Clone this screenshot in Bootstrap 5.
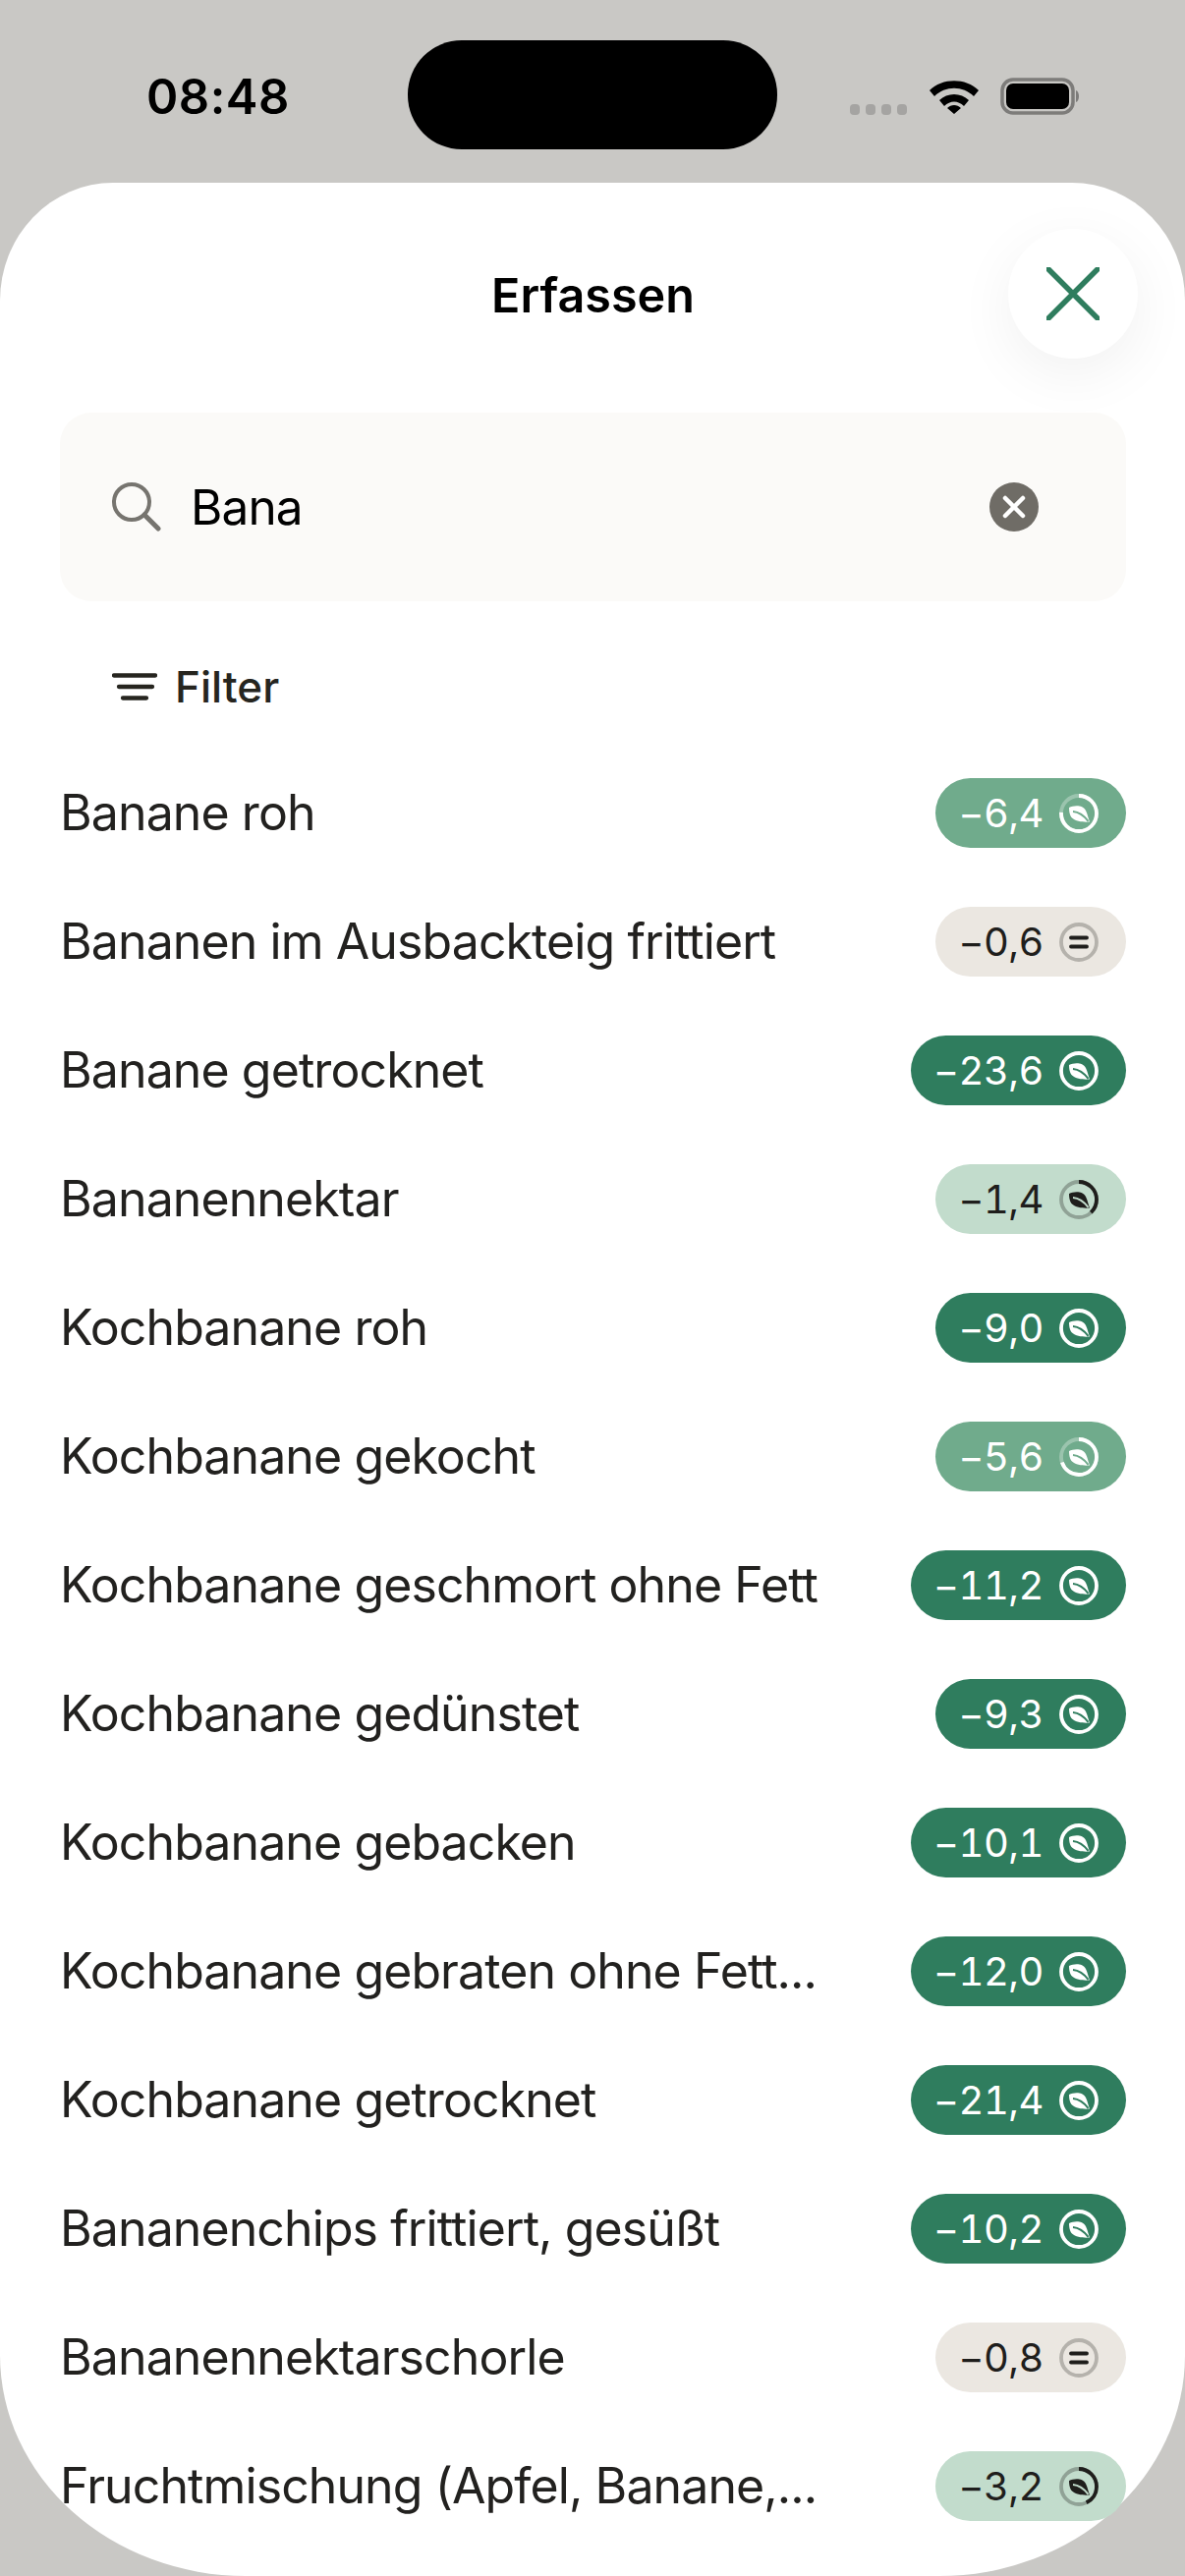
<!DOCTYPE html>
<html lang="de">
<head>
<meta charset="utf-8">
<title>Erfassen</title>
<link href="https://cdn.jsdelivr.net/npm/bootstrap@5.3.0/dist/css/bootstrap.min.css" rel="stylesheet">
<style>
html,body{height:100%}
body{background:#c9c8c5;font-family:Inter,"Liberation Sans",sans-serif;color:#1f1e1c;overflow:hidden}
.phone-frame{height:2622px;width:1206px}
.status-strip{height:186px;flex:none;padding:0 0 0 149px}
.clock-text{width:266px;font-size:49px;font-weight:600;color:#000;line-height:1;letter-spacing:.5px;margin-top:10px}
.island-pill{width:376px;height:111px;border-radius:55px;background:#000;margin-top:7px}
.status-icons{margin-left:74px;margin-top:9px}
.signal-dots{gap:6px;margin-top:27px;margin-right:22px}
.signal-dots i{display:block;width:10px;height:11px;border-radius:4px;background:#a5a4a2}
.battery-mark{margin-left:21px}
.sheet-panel{flex:1;background:#fff;border-radius:115px 115px 250px 250px/120px 120px 225px 225px;position:relative;padding:0 60px 0 61px}
.sheet-title{height:234px;padding-bottom:4px;font-size:48.500px;font-weight:600;color:#000}
.close-round{position:absolute;top:47px;right:48px;width:132px;height:132px;border:0;padding:0;border-radius:50%;background:#fff;box-shadow:0 16px 60px rgba(0,0,0,.06)}
.search-field{height:192px;border-radius:32px;background:#fbfaf8;padding:0 89px 0 53px;font-size:49.500px;letter-spacing:-.9px;color:#000}
.search-field span{margin-left:30px}
.filter-line{height:150px;padding:23px 0 0 53px;font-size:44px;font-weight:500;gap:18px;color:#26251f}
.food-row{height:131px;font-size:50px;letter-spacing:-.9px}
.food-name{color:#22211f}
.score-pill{height:71px;border-radius:36px;padding:0 28px 0 23px;font-size:40px;gap:16px;line-height:1;letter-spacing:-.5px;font-variant-numeric:tabular-nums}
.tone-strong{background:#2f7d5e;color:#fff;--cut:#2f7d5e}
.tone-mid{background:#70ab8c;color:#fff;--cut:#70ab8c}
.tone-soft{background:#c2dccc;color:#1f1e1c;--cut:#c2dccc}
.tone-flat{background:#ebe7e1;color:#1f1e1c}
.ring-track{opacity:.3}
.flat-ring{stroke:#b5b2ac}
</style>
</head>
<body>
<svg width="0" height="0" class="position-absolute">
<symbol id="leaf" viewBox="0 0 40 40">
<path d="M10 14C15 11.500 24 11 27 17C29 21 29.500 25 31 28.500C26 29 17 28.500 13 24.500C10.500 22 10 17 10 14Z" fill="currentColor"/>
<path d="M14 18C20 18.500 25 22 29.500 27.800" fill="none" stroke="var(--cut)" stroke-width="2"/>
</symbol>
</svg>
<div class="phone-frame d-flex flex-column">
<header class="status-strip d-flex align-items-center">
<div class="clock-text">08:48</div>
<div class="island-pill"></div>
<div class="status-icons d-flex align-items-center">
<div class="signal-dots d-flex"><i></i><i></i><i></i><i></i></div>
<svg width="52" height="38" viewBox="0 0 52 38"><path d="M1 14C14 1 38 1 51 14L46 20C35 9 17 9 6 20Z M11 24C19 16 33 16 41 24L36 30C30 24 22 24 16 30Z M19 32C23 28 29 28 33 32L26 38Z" fill="#000" transform="translate(0 -1)"/></svg>
<svg class="battery-mark" width="82" height="38" viewBox="0 0 82 38"><rect x="2" y="2" width="72" height="34" rx="11" fill="none" stroke="#7d7c7a" stroke-width="3.500"/><rect x="6" y="6" width="64" height="26" rx="7" fill="#000"/><path d="M77 13C81 14 81 24 77 25Z" fill="#7d7c7a"/></svg>
</div>
</header>
<main class="sheet-panel">
<div class="sheet-title d-flex align-items-center justify-content-center">Erfassen</div>
<button class="close-round d-flex align-items-center justify-content-center" type="button" aria-label="Schließen">
<svg width="54" height="54" viewBox="0 0 54 54"><path d="M2 2L52 52M52 2L2 52" stroke="#2f7d5e" stroke-width="5.500" stroke-linecap="round"/></svg>
</button>
<div class="search-field d-flex align-items-center">
<svg width="50" height="50" viewBox="0 0 50 50"><circle cx="20" cy="20" r="18" fill="none" stroke="#76746f" stroke-width="4"/><path d="M33 33L47 47" stroke="#76746f" stroke-width="5" stroke-linecap="round"/></svg>
<span class="flex-grow-1">Bana</span>
<svg width="50" height="50" viewBox="0 0 50 50"><circle cx="25" cy="25" r="25" fill="#6f6c66"/><path d="M16 16L34 34M34 16L16 34" stroke="#fff" stroke-width="4.500" stroke-linecap="round"/></svg>
</div>
<div class="filter-line d-flex align-items-center">
<svg width="46" height="28" viewBox="0 0 46 28"><path d="M2 2.500H44M7 14H41M11 25.500H35" stroke="#26251f" stroke-width="4.300" stroke-linecap="round"/></svg>
<span>Filter</span>
</div>
<div class="food-list">
<div class="food-row d-flex justify-content-between align-items-center"><span class="food-name">Banane roh</span><span class="score-pill tone-mid d-flex align-items-center">−6,4<svg width="40" height="40" viewBox="0 0 40 40"><circle class="ring-track" cx="20" cy="20" r="18" fill="none" stroke="currentColor" stroke-width="3.800"/><circle cx="20" cy="20" r="18" fill="none" stroke="currentColor" stroke-width="3.800" pathLength="100" stroke-dasharray="76 100" transform="rotate(-90 20 20)"/><use href="#leaf"/></svg></span></div>
<div class="food-row d-flex justify-content-between align-items-center"><span class="food-name">Bananen im Ausbackteig frittiert</span><span class="score-pill tone-flat d-flex align-items-center">−0,6<svg width="40" height="40" viewBox="0 0 40 40"><circle class="flat-ring" cx="20" cy="20" r="18" fill="none" stroke-width="3.800"/><path d="M12 15.500H28M12 24.500H28" stroke="currentColor" stroke-width="3.800" stroke-linecap="round"/></svg></span></div>
<div class="food-row d-flex justify-content-between align-items-center"><span class="food-name">Banane getrocknet</span><span class="score-pill tone-strong d-flex align-items-center">−23,6<svg width="40" height="40" viewBox="0 0 40 40"><circle cx="20" cy="20" r="18" fill="none" stroke="currentColor" stroke-width="3.800"/><use href="#leaf"/></svg></span></div>
<div class="food-row d-flex justify-content-between align-items-center"><span class="food-name">Bananennektar</span><span class="score-pill tone-soft d-flex align-items-center">−1,4<svg width="40" height="40" viewBox="0 0 40 40"><circle class="ring-track" cx="20" cy="20" r="18" fill="none" stroke="currentColor" stroke-width="3.800"/><circle cx="20" cy="20" r="18" fill="none" stroke="currentColor" stroke-width="3.800" pathLength="100" stroke-dasharray="38 100" transform="rotate(-90 20 20)"/><use href="#leaf"/></svg></span></div>
<div class="food-row d-flex justify-content-between align-items-center"><span class="food-name">Kochbanane roh</span><span class="score-pill tone-strong d-flex align-items-center">−9,0<svg width="40" height="40" viewBox="0 0 40 40"><circle cx="20" cy="20" r="18" fill="none" stroke="currentColor" stroke-width="3.800"/><use href="#leaf"/></svg></span></div>
<div class="food-row d-flex justify-content-between align-items-center"><span class="food-name">Kochbanane gekocht</span><span class="score-pill tone-mid d-flex align-items-center">−5,6<svg width="40" height="40" viewBox="0 0 40 40"><circle class="ring-track" cx="20" cy="20" r="18" fill="none" stroke="currentColor" stroke-width="3.800"/><circle cx="20" cy="20" r="18" fill="none" stroke="currentColor" stroke-width="3.800" pathLength="100" stroke-dasharray="70 100" transform="rotate(-90 20 20)"/><use href="#leaf"/></svg></span></div>
<div class="food-row d-flex justify-content-between align-items-center"><span class="food-name">Kochbanane geschmort ohne Fett</span><span class="score-pill tone-strong d-flex align-items-center">−11,2<svg width="40" height="40" viewBox="0 0 40 40"><circle cx="20" cy="20" r="18" fill="none" stroke="currentColor" stroke-width="3.800"/><use href="#leaf"/></svg></span></div>
<div class="food-row d-flex justify-content-between align-items-center"><span class="food-name">Kochbanane gedünstet</span><span class="score-pill tone-strong d-flex align-items-center">−9,3<svg width="40" height="40" viewBox="0 0 40 40"><circle cx="20" cy="20" r="18" fill="none" stroke="currentColor" stroke-width="3.800"/><use href="#leaf"/></svg></span></div>
<div class="food-row d-flex justify-content-between align-items-center"><span class="food-name">Kochbanane gebacken</span><span class="score-pill tone-strong d-flex align-items-center">−10,1<svg width="40" height="40" viewBox="0 0 40 40"><circle cx="20" cy="20" r="18" fill="none" stroke="currentColor" stroke-width="3.800"/><use href="#leaf"/></svg></span></div>
<div class="food-row d-flex justify-content-between align-items-center"><span class="food-name">Kochbanane gebraten ohne Fett...</span><span class="score-pill tone-strong d-flex align-items-center">−12,0<svg width="40" height="40" viewBox="0 0 40 40"><circle cx="20" cy="20" r="18" fill="none" stroke="currentColor" stroke-width="3.800"/><use href="#leaf"/></svg></span></div>
<div class="food-row d-flex justify-content-between align-items-center"><span class="food-name">Kochbanane getrocknet</span><span class="score-pill tone-strong d-flex align-items-center">−21,4<svg width="40" height="40" viewBox="0 0 40 40"><circle cx="20" cy="20" r="18" fill="none" stroke="currentColor" stroke-width="3.800"/><use href="#leaf"/></svg></span></div>
<div class="food-row d-flex justify-content-between align-items-center"><span class="food-name">Bananenchips frittiert, gesüßt</span><span class="score-pill tone-strong d-flex align-items-center">−10,2<svg width="40" height="40" viewBox="0 0 40 40"><circle cx="20" cy="20" r="18" fill="none" stroke="currentColor" stroke-width="3.800"/><use href="#leaf"/></svg></span></div>
<div class="food-row d-flex justify-content-between align-items-center"><span class="food-name">Bananennektarschorle</span><span class="score-pill tone-flat d-flex align-items-center">−0,8<svg width="40" height="40" viewBox="0 0 40 40"><circle class="flat-ring" cx="20" cy="20" r="18" fill="none" stroke-width="3.800"/><path d="M12 15.500H28M12 24.500H28" stroke="currentColor" stroke-width="3.800" stroke-linecap="round"/></svg></span></div>
<div class="food-row d-flex justify-content-between align-items-center"><span class="food-name">Fruchtmischung (Apfel, Banane,...</span><span class="score-pill tone-soft d-flex align-items-center">−3,2<svg width="40" height="40" viewBox="0 0 40 40"><circle class="ring-track" cx="20" cy="20" r="18" fill="none" stroke="currentColor" stroke-width="3.800"/><circle cx="20" cy="20" r="18" fill="none" stroke="currentColor" stroke-width="3.800" pathLength="100" stroke-dasharray="43 100" transform="rotate(-90 20 20)"/><use href="#leaf"/></svg></span></div>
</div>
</main>
</div>
<script src="https://cdn.jsdelivr.net/npm/bootstrap@5.3.0/dist/js/bootstrap.bundle.min.js"></script>
</body>
</html>
